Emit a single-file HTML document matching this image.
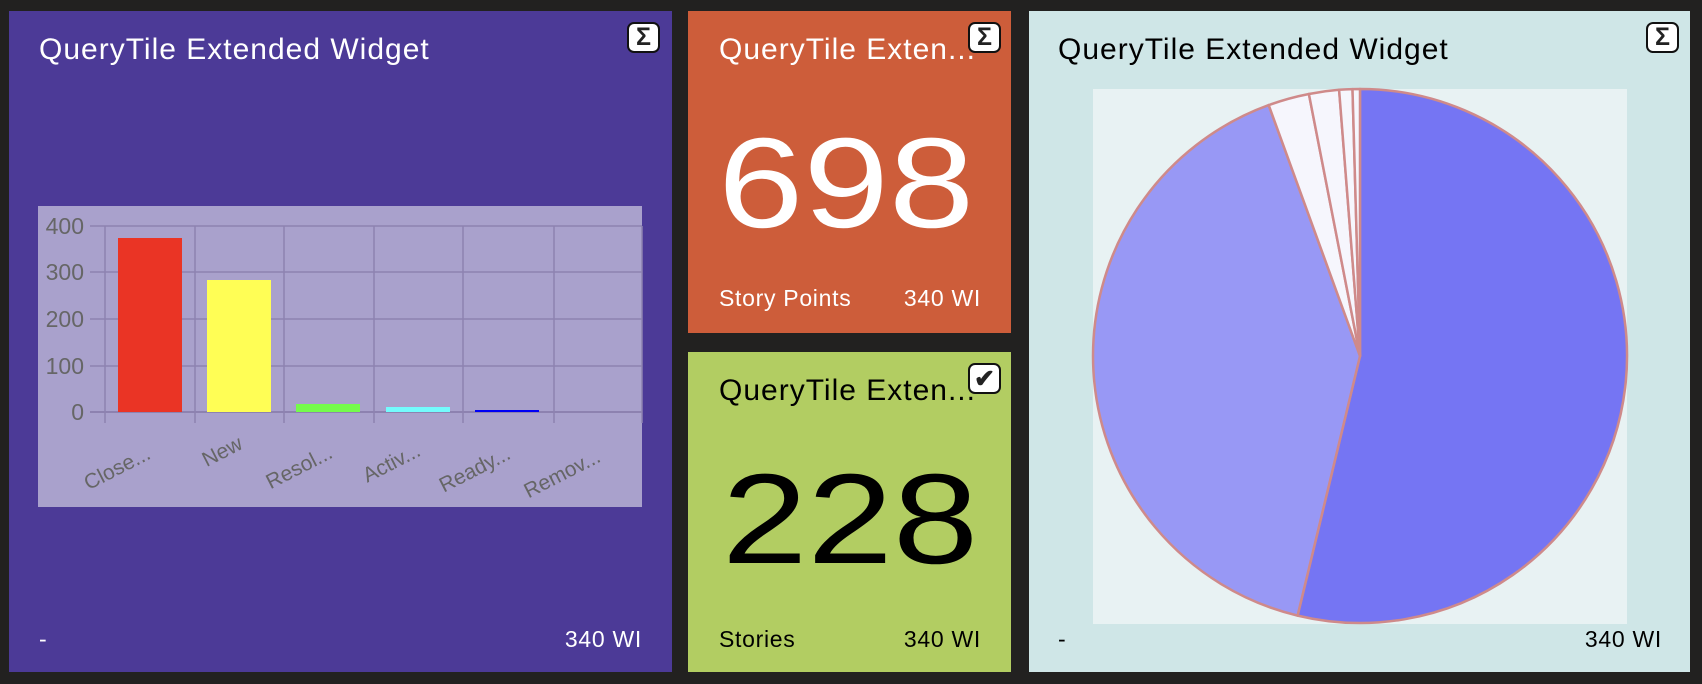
<!DOCTYPE html>
<html><head><meta charset="utf-8"><style>
body{margin:0;width:1702px;height:684px;background:#222120;overflow:hidden;font-family:"Liberation Sans",sans-serif;position:relative}
.t{position:absolute;box-sizing:border-box}
.title{position:absolute;font-size:30px;letter-spacing:1px;white-space:nowrap}
.ft{position:absolute;font-size:23px;letter-spacing:0.7px}
.ic{position:absolute;width:33px;height:31px;background:#fff;border:2px solid #111;border-radius:7px;box-sizing:border-box;display:flex;align-items:center;justify-content:center;font-size:25px;font-weight:bold;color:#222}
.big{position:absolute;font-size:128px;line-height:1;transform:scaleX(1.2);transform-origin:left top}
</style></head><body>
<div class="t" style="left:9px;top:11px;width:663px;height:661px;background:#4c3a97"></div>
<div class="title" style="left:39px;top:33px;color:#fff">QueryTile Extended Widget</div>
<div class="ic" style="left:627px;top:22px">Σ</div>
<svg style="position:absolute;left:0;top:0" width="700" height="684">
<rect x="38" y="206" width="604" height="301" fill="#a9a1cc"/>
<g stroke="#8d82b0" stroke-width="1.5">
<line x1="90" y1="226" x2="642" y2="226"/><line x1="90" y1="272" x2="642" y2="272"/><line x1="90" y1="319" x2="642" y2="319"/><line x1="90" y1="366" x2="642" y2="366"/>
<line x1="105" y1="226" x2="105" y2="423"/><line x1="195" y1="226" x2="195" y2="423"/><line x1="284" y1="226" x2="284" y2="423"/><line x1="374" y1="226" x2="374" y2="423"/><line x1="463" y1="226" x2="463" y2="423"/><line x1="554" y1="226" x2="554" y2="423"/><line x1="642" y1="226" x2="642" y2="423"/>
<line x1="90" y1="412" x2="642" y2="412" stroke-width="2"/></g>
<g font-size="23" fill="#666" text-anchor="end" font-family="Liberation Sans">
<text x="84" y="234">400</text><text x="84" y="280">300</text><text x="84" y="327">200</text><text x="84" y="374">100</text><text x="84" y="420">0</text></g>
<rect x="118" y="238" width="64" height="174" fill="#ea3425"/>
<rect x="207" y="280" width="64" height="132" fill="#fffe55"/>
<rect x="296" y="404" width="64" height="8" fill="#75fb4c"/>
<rect x="386" y="407" width="64" height="5" fill="#74fbfd"/>
<rect x="475" y="410" width="64" height="2" fill="#0000f5"/>
<g font-size="21" fill="#666" text-anchor="end" font-family="Liberation Sans">
<text transform="translate(152,458) rotate(-27)">Close...</text>
<text transform="translate(244,448) rotate(-27)">New</text>
<text transform="translate(334,457) rotate(-27)">Resol...</text>
<text transform="translate(422,455) rotate(-27)">Activ...</text>
<text transform="translate(512,458) rotate(-27)">Ready...</text>
<text transform="translate(602,461) rotate(-27)">Remov...</text></g>
</svg>
<div class="ft" style="left:39px;top:626px;color:#fff">-</div>
<div class="ft" style="right:1060px;top:626px;color:#fff">340 WI</div>

<div class="t" style="left:688px;top:11px;width:323px;height:322px;background:#cd5d3a"></div>
<div class="title" style="left:719px;top:33px;color:#fff">QueryTile Exten...</div>
<div class="ic" style="left:968px;top:22px">Σ</div>
<div class="big" style="left:718px;top:120px;color:#fff">698</div>
<div class="ft" style="left:719px;top:285px;color:#fff">Story Points</div>
<div class="ft" style="right:721px;top:285px;color:#fff">340 WI</div>

<div class="t" style="left:688px;top:352px;width:323px;height:320px;background:#b2cd62"></div>
<div class="title" style="left:719px;top:374px;color:#000">QueryTile Exten...</div>
<div class="ic" style="left:968px;top:363px">✔</div>
<div class="big" style="left:722px;top:456px;color:#000">228</div>
<div class="ft" style="left:719px;top:626px;color:#000">Stories</div>
<div class="ft" style="right:721px;top:626px;color:#000">340 WI</div>

<div class="t" style="left:1029px;top:11px;width:661px;height:661px;background:#cfe6e7"></div>
<div class="title" style="left:1058px;top:33px;color:#000">QueryTile Extended Widget</div>
<div class="ic" style="left:1646px;top:22px">Σ</div>
<svg style="position:absolute;left:0;top:0" width="1702" height="684">
<rect x="1093" y="89" width="534" height="535" fill="#e8f2f3"/>
<g stroke="#cf8a8a" stroke-width="2.5" stroke-linejoin="round">
<path d="M1360,356 L1360,89 A267,267 0 1 1 1297.6,615.6 Z" fill="#7575f3"/>
<path d="M1360,356 L1297.6,615.6 A267,267 0 0 1 1268.7,105.1 Z" fill="#9898f5"/>
<path d="M1360,356 L1268.7,105.1 A267,267 0 0 1 1308.9,94 Z" fill="#f6f6fd"/>
<path d="M1360,356 L1308.9,94 A267,267 0 0 1 1339.1,89.8 Z" fill="#f6f6fd"/>
<path d="M1360,356 L1339.1,89.8 A267,267 0 0 1 1352.5,89.1 Z" fill="#f6f6fd"/>
<path d="M1360,356 L1352.5,89.1 A267,267 0 0 1 1360,89 Z" fill="#f6f6fd"/>
</g></svg>
<div class="ft" style="left:1058px;top:626px;color:#000">-</div>
<div class="ft" style="right:40px;top:626px;color:#000">340 WI</div>
</body></html>
